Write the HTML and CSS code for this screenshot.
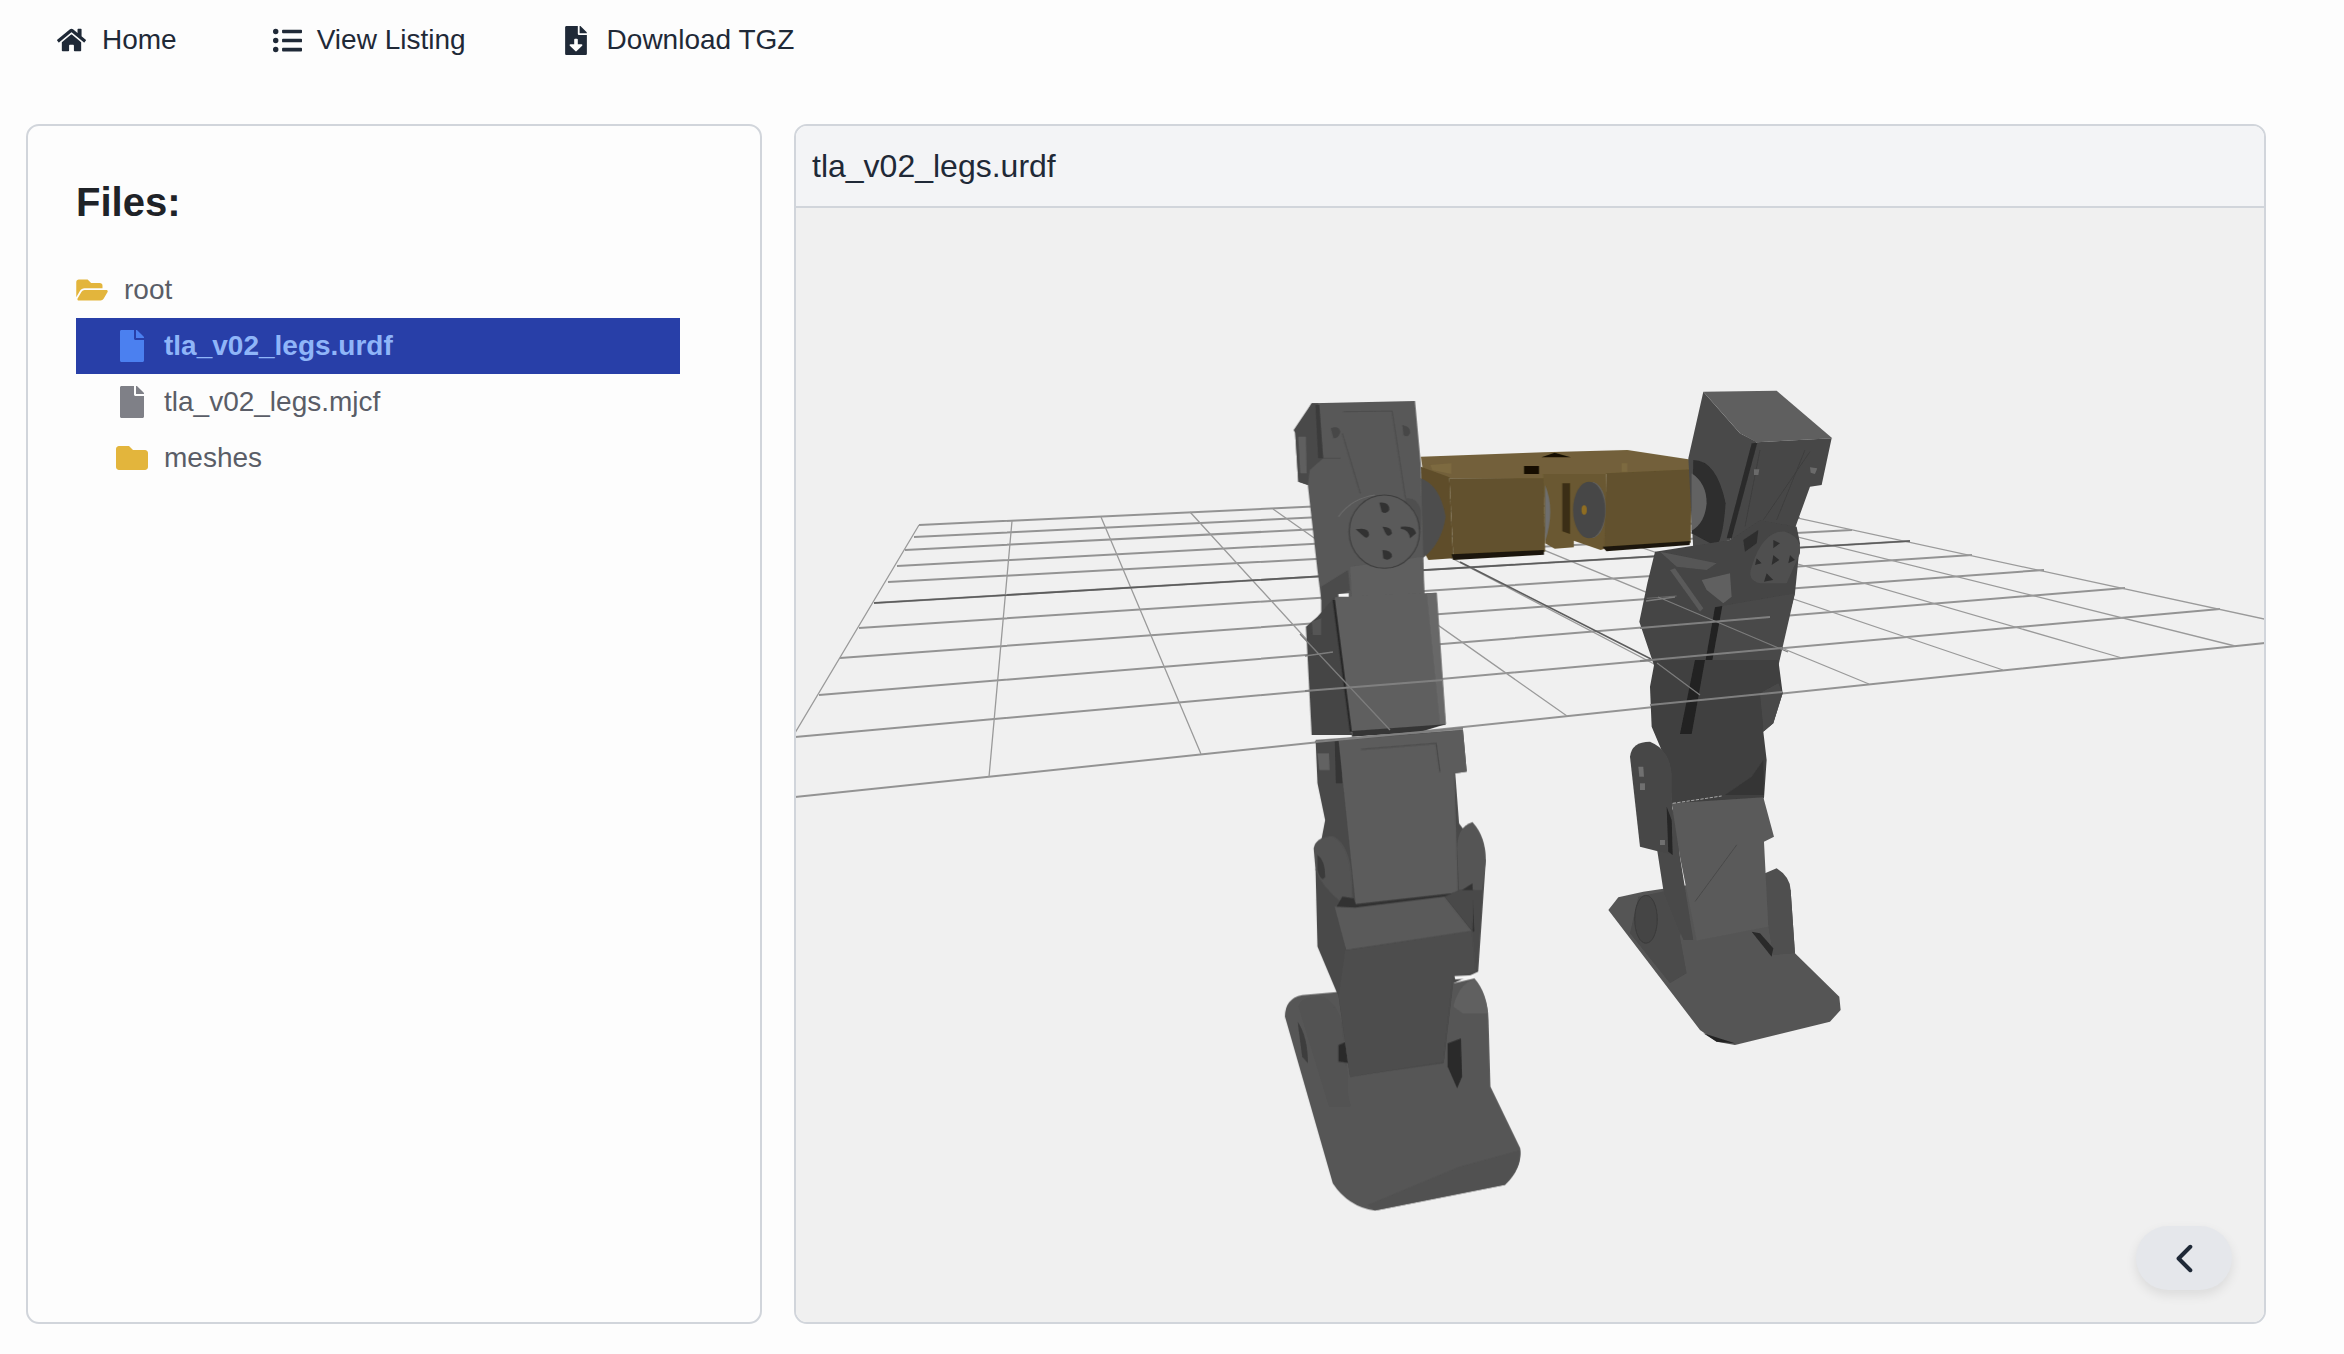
FILE: index.html
```html
<!DOCTYPE html>
<html lang="en">
<head>
<meta charset="utf-8">
<title>tla_v02_legs.urdf</title>
<link rel="stylesheet" href="styles.css">
</head>
<body>
<nav class="topnav">
  <a class="nav-item"><svg class="ic-home" viewBox="0 0 576 512"><path d="M280.37 148.26L96 300.11V464a16 16 0 0 0 16 16l112.06-.29a16 16 0 0 0 15.92-16V368a16 16 0 0 1 16-16h64a16 16 0 0 1 16 16v95.64a16 16 0 0 0 16 16.05L464 480a16 16 0 0 0 16-16V300L295.67 148.26a12.19 12.19 0 0 0-15.3 0zM571.6 251.47L488 182.56V44.05a12 12 0 0 0-12-12h-56a12 12 0 0 0-12 12v72.61L318.47 43a48 48 0 0 0-61 0L4.34 251.47a12 12 0 0 0-1.6 16.9l25.5 31A12 12 0 0 0 45.15 301l235.22-193.74a12.19 12.19 0 0 1 15.3 0L530.9 301a12 12 0 0 0 16.9-1.6l25.5-31a12 12 0 0 0-1.7-16.93z"/></svg>Home</a>
  <a class="nav-item"><svg class="ic-list" viewBox="0 0 512 512"><path d="M48 48a48 48 0 1 0 48 48 48 48 0 0 0-48-48zm0 160a48 48 0 1 0 48 48 48 48 0 0 0-48-48zm0 160a48 48 0 1 0 48 48 48 48 0 0 0-48-48zm448 16H176a16 16 0 0 0-16 16v32a16 16 0 0 0 16 16h320a16 16 0 0 0 16-16v-32a16 16 0 0 0-16-16zm0-320H176a16 16 0 0 0-16 16v32a16 16 0 0 0 16 16h320a16 16 0 0 0 16-16V80a16 16 0 0 0-16-16zm0 160H176a16 16 0 0 0-16 16v32a16 16 0 0 0 16 16h320a16 16 0 0 0 16-16v-32a16 16 0 0 0-16-16z"/></svg>View Listing</a>
  <a class="nav-item nav-item-dl"><svg class="ic-dl" viewBox="0 0 384 512"><path d="M224 136V0H24C10.7 0 0 10.7 0 24v464c0 13.3 10.7 24 24 24h336c13.3 0 24-10.7 24-24V160H248c-13.2 0-24-10.8-24-24zm76.45 211.36l-96.42 95.7c-6.65 6.61-17.39 6.61-24.04 0l-96.42-95.7C73.42 337.29 80.54 320 94.82 320H160v-80c0-8.84 7.16-16 16-16h32c8.84 0 16 7.16 16 16v80h65.18c14.28 0 21.4 17.29 11.27 27.36zM377 105L279.1 7c-4.5-4.5-10.6-7-17-7H256v128h128v-6.1c0-6.3-2.5-12.4-7-16.9z"/></svg>Download TGZ</a>
</nav>
<main class="layout">
  <section class="card files">
    <h2 class="files-title">Files:</h2>
    <ul class="tree">
      <li class="row"><svg class="ic-folder-open" viewBox="0 0 576 512"><path d="M572.694 292.093L500.27 416.248A63.997 63.997 0 0 1 444.989 448H45.025c-18.523 0-30.064-20.093-20.731-36.093l72.424-124.155A64 64 0 0 1 152 256h399.964c18.523 0 30.064 20.093 20.73 36.093zM152 224h328v-48c0-26.51-21.49-48-48-48H272l-64-64H48C21.49 64 0 85.49 0 112v278.046l69.077-118.418C86.214 242.25 117.989 224 152 224z"/></svg>root</li>
      <li class="row child selected"><svg class="ic-file" viewBox="0 0 384 512"><path d="M224 136V0H24C10.7 0 0 10.7 0 24v464c0 13.3 10.7 24 24 24h336c13.3 0 24-10.7 24-24V160H248c-13.2 0-24-10.8-24-24zm160-14.1v6.1H256V0h6.1c6.4 0 12.5 2.5 17 7l97.9 98c4.5 4.5 7 10.6 7 16.9z"/></svg>tla_v02_legs.urdf</li>
      <li class="row child"><svg class="ic-file" viewBox="0 0 384 512"><path d="M224 136V0H24C10.7 0 0 10.7 0 24v464c0 13.3 10.7 24 24 24h336c13.3 0 24-10.7 24-24V160H248c-13.2 0-24-10.8-24-24zm160-14.1v6.1H256V0h6.1c6.4 0 12.5 2.5 17 7l97.9 98c4.5 4.5 7 10.6 7 16.9z"/></svg>tla_v02_legs.mjcf</li>
      <li class="row child"><svg class="ic-folder" viewBox="0 0 512 512"><path d="M464 128H272l-64-64H48C21.49 64 0 85.49 0 112v288c0 26.51 21.49 48 48 48h416c26.51 0 48-21.49 48-48V176c0-26.51-21.49-48-48-48z"/></svg>meshes</li>
    </ul>
  </section>
  <section class="card viewer">
    <header class="viewer-head">tla_v02_legs.urdf</header>
    <div class="viewer-body">
      <svg class="scene" viewBox="796 208 1468 1114" preserveAspectRatio="none">
        <defs><filter id="soft" x="-5%" y="-5%" width="110%" height="110%"><feGaussianBlur stdDeviation="0.6"/></filter></defs>
        <g filter="url(#soft)">
          <!-- floor grid: rows -->
          <g class="grid-a">
            <path d="M919 525L1668 490M914 537L1708 498M905 550L1752 507M897 566L1800 518M888 582L1852 530M874 603L1910 541M859 628L1972 555M840 658L2044 570M819 695L2125 588M795 737L2220 609M795 797L2265 643"/>
          </g>
          <g class="grid-b">
            <path d="M919 525L755 800M1012 521L989 777M1101 517L1201 754M1190 512L1393 734M1273 509L1567 716M1350 505L1723 700M1425 501L1869 684M1495 498L2003 670M1560 495L2122 658M1617 492L2235 646M1668 490L2338 635"/>
          </g>
          <path class="grid-dark" d="M874 603L1910 541M1460 562L1651 659"/>

          <!-- gold hip -->
          <g transform="translate(1260 370) scale(.3827 .3333)">
            <path fill="#73613a" d="M420 260L740 247L960 240L1132 270L1130 310L905 312L740 328L495 325L425 300Z"/>
            <path fill="#5f4e2a" d="M420 290L495 322L505 565L440 570L425 540Z"/>
            <path fill="#62512d" d="M495 325L742 325L745 545L505 560Z"/>
            <path fill="#6a5831" d="M740 312L905 312L905 535L890 540L820 512L820 532L770 536L745 520Z"/>
            <path fill="#62512d" d="M905 310L1132 298L1125 518L900 538Z"/>
            <path fill="#1e190c" d="M500 553L742 540L742 554L505 570ZM895 530L1125 513L1122 525L905 544Z"/>
            <path fill="#3b2f14" d="M790 340L810 340L810 492L790 484Z"/>
            <path fill="#151105" d="M690 288L729 288L729 312L690 312ZM735 262L770 248L812 262Z"/>
            <path fill="#7d6a40" d="M445 285L500 280L500 312L450 300ZM945 280L960 280L960 305L945 305Z"/>
            <path fill="#626262" d="M870 335Q905 350 903 425Q900 495 868 505Z"/>
            <ellipse fill="#474747" cx="860" cy="420" rx="42" ry="85"/>
            <ellipse fill="#8f6d20" cx="847" cy="420" rx="7" ry="14"/>
            <path fill="#6e6e6e" d="M745 345Q772 420 745 515Z"/>
            <path fill="#6b6b6b" d="M1132 320Q1170 350 1168 410Q1165 465 1130 482Z"/>
          </g>

          <!-- left leg, upper -->
          <g transform="translate(1260 370) scale(.3827 .3333)">
            <path fill="#4e4e4e" d="M420 325Q470 345 485 440Q475 520 425 565Z"/>
            <path fill="#585858" d="M135 100L405 93L420 280L430 690L160 690L150 600L125 345L100 335L92 190Z"/>
            <path fill="#4a4a4a" d="M88 180L135 100L152 100L165 265L130 300L125 345L100 335L92 190Z"/>
            <path fill="#3a3a3a" d="M145 105L155 105L165 265L152 265Z"/>
            <path fill="#5f5f5f" d="M100 200L120 200L122 310L105 310Z"/>
            <path fill="none" stroke="#4d4d4d" stroke-width="3" d="M218 125L345 123L380 385M215 190L262 370M165 265L210 265"/>
            <path fill="#474747" d="M185 175Q205 165 210 185Q205 205 192 205ZM372 165Q395 170 392 190Q385 205 375 195Z"/>
            <path fill="#4f4f4f" d="M380 385Q410 380 420 420L420 480L380 420Z"/>
            <path fill="#5e5e5e" d="M235 590L425 560L430 690L240 690Z"/>
            <path fill="#4c4c4c" d="M160 650L230 600L235 660L190 690L180 740L160 730Z"/>
            <ellipse fill="#5a5a5a" stroke="#3e3e3e" stroke-width="3" cx="325" cy="485" rx="92" ry="110"/>
            <path fill="#333" d="M312 398Q338 395 338 420Q330 435 318 425ZM250 478Q285 470 285 495Q280 510 270 498ZM320 470Q345 470 345 490Q335 505 328 490ZM368 470Q405 465 408 490L392 505Q390 480 368 476ZM320 540Q345 540 345 560Q335 575 322 565Z"/>
            <path fill="none" stroke="#6c6c6c" stroke-width="3" d="M205 440Q240 385 300 375"/>
            <path fill="#444" d="M120 770L150 740L195 680L240 1095L135 1095L122 810Z"/>
            <path fill="#555" d="M135 755L160 745L160 795L138 795Z"/>
            <path fill="#252525" d="M190 690L205 690L250 1085L235 1085Z"/>
            <path fill="#5f5f5f" d="M195 682L460 668L485 1065L240 1085Z"/>
            <path fill="#676767" d="M435 670L462 668L486 1062L470 1065Z"/>
            <path fill="#353535" d="M240 1083L485 1063L420 1085L240 1100Z"/>
            <path fill="#f6f6f6" d="M205 672L232 670L232 680L205 680Z"/>
          </g>

          <!-- left leg, lower -->
          <g transform="translate(1260 720) scale(.3827 .3333)">
            <path fill="#575757" d="M65 890Q65 835 110 825L215 815L505 790L560 775Q595 820 597 900L602 1100L680 1285Q685 1345 640 1395L300 1472Q230 1460 190 1390Z"/>
            <path fill="#515151" d="M280 1455L520 1340L680 1290Q685 1345 640 1395L300 1472Z"/>
            <path fill="#606060" d="M505 860Q520 790 560 778Q590 820 596 880L530 880Z"/>
            <path fill="#2c2c2c" d="M490 970L525 955L528 1070L515 1105L490 1040Z"/>
            <path fill="#525252" d="M100 860Q105 830 160 828Q215 850 220 960L230 1070Q225 1120 238 1160L180 1160Z"/>
            <path fill="#3e3e3e" d="M98 905Q125 950 125 1030L110 1010Z"/>
            <path fill="#2c2c2c" d="M205 975L235 960L238 1030L205 1025Z"/>
            <path fill="#4a4a4a" d="M145 60L530 28L540 155L510 160L520 310L590 420L570 755L505 790L480 1030L235 1070L205 830L150 680L145 450L170 300L150 190Z"/>
            <path fill="#353535" d="M195 65L210 60L215 190L198 190Z"/>
            <path fill="#626262" d="M150 100L180 100L182 150L155 150Z"/>
            <path fill="#525252" d="M140 385Q145 350 190 348Q235 370 240 480L242 545L215 550Q160 500 145 450Z"/>
            <path fill="#3b3b3b" d="M150 405Q170 420 170 470Q160 490 150 450Z"/>
            <path fill="#555" d="M515 385Q515 320 555 306Q590 350 590 420L580 510L520 510Z"/>
            <path fill="#5b5b5b" d="M205 60L530 28L540 155L508 160L517 520L250 555Z"/>
            <path fill="none" stroke="#4a4a4a" stroke-width="3" d="M265 88L460 70L470 155"/>
            <path fill="#333" d="M215 530L245 535L250 552L517 518L555 490L560 635L225 690L200 560Z"/>
            <path fill="#5a5a5a" d="M195 560L248 563L482 530L555 635L225 690Z"/>
            <path fill="#484848" d="M482 530L520 510L560 510L555 635Z"/>
            <path fill="#4d4d4d" d="M222 690L555 632L565 755L505 772L480 1026L235 1072L205 830Z"/>
            <path fill="#f6f6f6" d="M508 768L560 765L558 775L510 778Z"/>
          </g>

          <!-- right leg, upper -->
          <g transform="translate(1560 370) scale(.3333)">
            <path fill="#4a4a4a" d="M430 65L540 190L590 215L510 510L400 540L385 265Z"/>
            <path fill="#5e5e5e" d="M430 65L650 62L817 205L590 217L540 190Z"/>
            <path fill="#474747" d="M590 217L815 205L785 345L750 350L705 475L600 470L510 510Z"/>
            <path fill="#2b2b2b" d="M575 220L592 218L515 505L500 505Z"/>
            <path fill="#2d2d2d" d="M400 270Q470 270 497 400Q490 500 470 530L395 490Z"/>
            <path fill="#626262" d="M395 310Q440 340 440 400Q435 460 395 482Z"/>
            <path fill="none" stroke="#3e3e3e" stroke-width="3" d="M600 240L555 470M610 450L750 245M650 450L735 240"/>
            <path fill="#6a6a6a" d="M582 298L598 298L595 315L582 315ZM750 292L772 295L765 312L752 308Z"/>
            <path fill="#444" d="M285 545L510 510L600 450L710 470L720 520L705 670L640 910L290 910L238 755L262 640Z"/>
            <path fill="#565656" d="M300 545L375 560L470 580L440 600L350 590Z"/>
            <path fill="#5a5a5a" d="M330 600L345 595L430 715L420 725Z"/>
            <path fill="#606060" d="M425 630L510 610L515 680L490 700L440 660Z"/>
            <path fill="#484848" d="M470 710L705 670L650 910L440 910Z"/>
            <path fill="#222" d="M465 712L487 708L450 910L430 910Z"/>
            <path fill="#2d2d2d" d="M550 510L595 480L590 520L555 545Z"/>
            <path fill="#505050" d="M575 590Q610 480 675 485Q725 500 720 550L680 640L600 640Q560 630 575 590Z"/>
            <path fill="#2e2e2e" d="M640 510L660 520L640 535ZM590 565L605 580L585 585ZM640 555L658 570L635 585ZM690 555L705 570L685 580ZM620 610L640 630L612 635Z"/>
            <path fill="none" stroke="#7a7a7a" stroke-width="2" d="M260 685L350 678"/>
          </g>

          <!-- right leg, lower -->
          <g transform="translate(1560 660) scale(.3333)">
            <path fill="#555" d="M145 750L175 712L250 695L620 640L692 690L705 880L838 1010L842 1050L810 1085L525 1155L470 1145L420 1110Z"/>
            <path fill="#4f4f4f" d="M615 640L650 625Q690 650 692 690L705 880L640 885L625 800Z"/>
            <path fill="#2a2a2a" d="M575 815L600 820L640 865L635 890Z"/>
            <path fill="#4b4b4b" d="M210 820L235 710L330 690L378 745L360 830L380 940L330 970Z"/>
            <ellipse fill="#444" stroke="#353535" stroke-width="2" cx="258" cy="778" rx="34" ry="72"/>
            <path fill="#222" d="M430 1120L525 1150L470 1145Z"/>
            <path fill="#4a4a4a" d="M290 560L345 430L360 590L400 840L370 840L310 690Z"/>
            <path fill="#3f3f3f" d="M285 0L655 0L668 100L640 190L610 215L620 300L612 415L335 435L330 330L275 200L270 80Z"/>
            <path fill="#222" d="M360 222L395 222L435 0L405 0Z"/>
            <path fill="#4a4a4a" d="M610 215L640 190L668 100L655 70L600 100L610 200Z"/>
            <path fill="#363636" d="M575 350L610 300L612 405L495 405Z"/>
            <path fill="#474747" d="M210 290Q215 245 270 245Q330 270 335 340L338 585L240 560Z"/>
            <path fill="#6f6f6f" d="M235 320L250 320L252 350L238 350ZM240 370L255 370L255 390L240 390ZM300 540L315 540L315 555L300 555Z"/>
            <path fill="#252525" d="M320 440L335 480L338 585L325 575Z"/>
            <path fill="#5a5a5a" d="M335 430L610 412L642 530L612 545L625 800L410 842L360 590Z"/>
            <path fill="none" stroke="#4a4a4a" stroke-width="3" d="M405 725L530 555"/>
            <path fill="none" stroke="#dcdcdc" stroke-width="2" stroke-dasharray="10 4" d="M338 430L420 418L485 408"/>
          </g>

          <!-- grid pieces in front of the legs -->
          <path class="grid-over" d="M1305 691L1443 680M1640 661L1782 648M1315 742L1463 728M1650 705L1782 692M1640 628L1770 617"/>
          <path class="grid-over-thin" d="M1300 634L1390 730M1657 663L1700 695M1658 597L1788 652M1305 656L1333 652M1646 601L1675 597"/>
        </g>
      </svg>
      <button class="toggle" type="button" aria-label="Collapse"><svg class="chevron" viewBox="0 0 20 32"><path d="M17 3L4 16L17 29"/></svg></button>
    </div>
  </section>
</main>
</body>
</html>
```

FILE: styles.css
```css
* { box-sizing: border-box; }
html, body { margin: 0; height: 100%; }
body {
  background: #fdfdfd;
  color: #1f2937;
  font-family: "Liberation Sans", Arial, sans-serif;
  overflow: hidden;
}
.topnav {
  display: flex;
  align-items: center;
  gap: 96px;
  height: 124px;
  padding: 0 0 44px 57px;
  font-size: 28px;
}
.nav-item { display: flex; align-items: center; color: #1f2937; }
.nav-item svg { fill: #1f2937; flex: none; }
.nav-item-dl { margin-left: 3px; }
.ic-home { width: 29px; height: 26px; margin-right: 16px; }
.ic-list { width: 29px; height: 29px; margin-right: 15px; }
.ic-dl { width: 22px; height: 29px; margin-right: 20px; }

.layout {
  display: grid;
  grid-template-columns: 736px 1472px;
  gap: 32px;
  padding-left: 26px;
  height: 1200px;
}
.card {
  border: 2px solid #d1d5db;
  border-radius: 13px;
  overflow: hidden;
}
.files { padding: 50px 48px 0; }
.files-title {
  margin: 0;
  font-size: 40px;
  line-height: 52px;
  font-weight: 700;
  color: #1f2328;
}
.tree {
  list-style: none;
  margin: 34px 0 0;
  padding: 0;
  width: 604px;
  color: #5a5d67;
  font-size: 28px;
}
.row {
  display: flex;
  align-items: center;
  height: 56px;
}
.row svg { fill: #e3b53c; flex: none; }
.ic-folder-open { width: 32px; height: 28px; margin-right: 16px; }
.row.child { padding-left: 40px; }
.ic-folder { width: 32px; height: 32px; margin-right: 16px; }
.ic-file { width: 24px; height: 32px; margin: 0 20px 0 4px; }
.row svg.ic-file { fill: #7f8087; }
.selected { background: #283fa8; color: #8fb5f8; font-weight: 700; }
.row.selected svg.ic-file { fill: #4b80f0; }

.viewer { display: flex; flex-direction: column; }
.viewer-head {
  height: 82px;
  flex: none;
  padding: 0 16px;
  display: flex;
  align-items: center;
  font-size: 32px;
  color: #1f2937;
  background: #f3f4f6;
  border-bottom: 2px solid #d1d5db;
}
.viewer-body { position: relative; flex: 1; background: #f0f0f0; min-height: 0; }
.scene { display: block; width: 100%; height: 100%; }
.grid-a { stroke: #939393; stroke-width: 2; fill: none; }
.grid-b { stroke: #9a9a9a; stroke-width: 1.3; fill: none; }
.grid-dark { stroke: #5c5c5c; stroke-width: 1.6; fill: none; }
.grid-over { stroke: #808080; stroke-width: 2; fill: none; }
.grid-over-thin { stroke: #7c7c7c; stroke-width: 1.3; fill: none; }
.toggle {
  position: absolute;
  right: 32px;
  bottom: 32px;
  width: 96px;
  height: 64px;
  padding: 0;
  border: 0;
  border-radius: 32px;
  background: #e5e7eb;
  box-shadow: 0 5px 12px rgba(0, 0, 0, .09);
  display: flex;
  align-items: center;
  justify-content: center;
}
.chevron { width: 18px; height: 29px; fill: none; stroke: #1f2937; stroke-width: 4.5; stroke-linecap: round; stroke-linejoin: round; }
```
